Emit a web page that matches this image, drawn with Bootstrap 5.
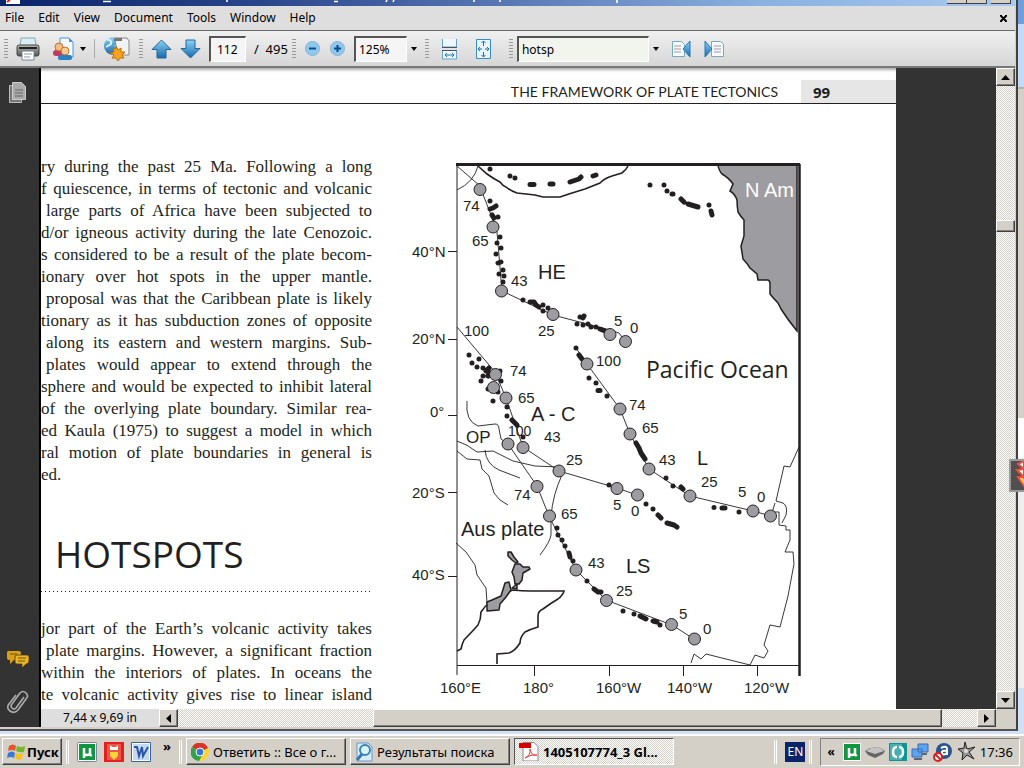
<!DOCTYPE html>
<html lang="en">
<head>
<meta charset="utf-8">
<meta name="viewport" content="width=device-width, initial-scale=1">
<title>Document viewer</title>
<link href="https://cdn.jsdelivr.net/npm/bootstrap@5.3.0/dist/css/bootstrap.min.css" rel="stylesheet">
<script src="https://cdn.jsdelivr.net/npm/bootstrap@5.3.0/dist/js/bootstrap.bundle.min.js" defer></script>
<style>
:root{--face:#d4d0c8;--ink:#231f20}
body{height:100vh;min-height:480px;font-family:"Noto Sans",sans-serif;font-size:13px;line-height:16px;color:#000;background:#d2e0f5}
button{font:inherit;color:inherit;padding:0;border:0;background:none}
svg{display:block;flex:none}
.frame-right{border-right:2px solid #404040;border-bottom:2px solid #55534f;background:var(--face);padding:0 1px 2px 0}
.titlebar{height:6px;background:linear-gradient(90deg,#0a246a,#28458a 25%,#5878b4 50%,#8cb0e0 75%,#a6caf0)}
.capbtn{width:20px;height:4px;background:var(--face);border:solid #404040;border-width:0 1px 1px 0}
.menubar{height:25px;background:#dedede;border-bottom:1px solid #6a6a6a;padding:0 8px 0 5px;gap:14px;font-size:12px}
.menubar a{color:#000;text-decoration:none}
.tools{height:37px;background:linear-gradient(#f0f0f0,#d6d6d6);border-bottom:2px solid #777}
.tools .field{height:26px;border:1px solid #fff;border-top:2px solid #555;border-left:2px solid #555;background:#f5f5f5;padding:0 3px;border-radius:0;font-size:12px;outline:0}
.tools .page-no{width:37px;padding-left:6px;margin-left:8px}
.tools .zoom{width:53px}
.tools .find{width:132px;background:#f2f4ee}
.grip{width:4px;height:22px;background:radial-gradient(circle,#999 1px,transparent 1px) 0 0/2px 3px}
.arrow-dn{border:3px solid transparent;border-top:4px solid #000;border-bottom:0}
.side{width:41px;background:#333;border-right:2px solid #000;padding:14px 4px 13px 0}
.workspace{background:#333}
.sheet{background:#fff;margin-right:100px;box-shadow:inset 0 4px 3px -2px #aaa;color:var(--ink)}
.runhead{height:36px;border-bottom:1px solid #231f20;padding-top:12px;font:14px/16px Lato,sans-serif}
.runhead .folio{width:95px;background:#e6e6e6;padding-left:12px;font:bold 15px/16px "Open Sans",sans-serif}
.runhead .runtitle{padding-right:23px}
.prose{width:331px;padding-top:52px;font-family:"Liberation Serif",serif;font-size:17px;line-height:22px}
.prose .ln{text-align-last:justify;white-space:nowrap}
.prose .in{padding-left:5px}
.prose .end{text-align-last:left}
.prose h1{font:37px/44px "Open Sans",sans-serif;margin:46px 0 15px 14px}
.dots{height:1px;background:repeating-linear-gradient(90deg,#231f20 0 1px,transparent 1px 4px);margin-bottom:26px}
.mapbox{padding-top:51px;margin-left:36px}
.dither{background:repeating-conic-gradient(#fff 0 25%,#d4d0c8 0 50%) 0 0/2px 2px}
.raised{background:var(--face);border:1px solid;border-color:#fff #404040 #404040 #fff;box-shadow:inset -1px -1px #808080}
.vscroll{width:19px}
.vscroll button,.hscroll button{width:19px;height:18px}
.hscroll{height:18px}
.status{width:118px;background:#dedede;text-align:center;font-size:12px;line-height:18px}
.desk-edge{width:6px;background:linear-gradient(#6e9edb 0 24px,#c4d9f5 24px 87px,#b5b2ab 87px 89px,#d4d0c8 89px 418px,#fff 418px 458px,#eee 458px 688px,#d2e0f5 688px)}
.taskbar{height:34px;background:var(--face);border-top:2px solid #fff;gap:4px;padding:2px 4px 3px 2px;margin-top:3px}
.task{height:27px;width:160px;padding:0 4px;white-space:nowrap}
.start{width:60px}
.launch{gap:7px;margin:0 8px 0 4px}
.sunk{border:1px solid;border-color:#555 #fff #fff #555}
.rail{width:3px;height:24px;border:solid;border-width:0 1px;border-color:#808080 #fff}
.tray{border:1px solid;border-color:#808080 #fff #fff #808080;height:28px;padding:0 6px;gap:4px;font-size:12px}
.clock{font-size:13px}
.lang{background:#0a246a;color:#fff;width:20px;height:20px;line-height:20px;font-size:12px}
.flame{right:0;top:459px;width:15px;height:33px;background:#505050;border:2px solid #999;border-right:0}
</style>
</head>
<body class="d-flex flex-column overflow-hidden position-relative">
<div class="d-flex flex-fill overflow-hidden">
 <main class="frame-right d-flex flex-column flex-fill overflow-hidden">
  <div class="titlebar d-flex align-items-start">
   <svg width="640" height="6"><path d="M6 0h14v4H6z" fill="#fff"/><path d="M7 2l3-2" stroke="#d22" stroke-width="2"/><path d="M103 1.500h8M227 0v2M334 1.500h4M387 0l-1 2M394 0l-1 2M474 0v2M500 0v2M617 0v3" stroke="#fff" stroke-width="1.600"/></svg>
   <span class="capbtn ms-auto"></span><span class="capbtn"></span><span class="capbtn ms-1 me-1"></span>
  </div>
  <nav class="menubar d-flex align-items-center">
   <a href="#">File</a><a href="#">Edit</a><a href="#">View</a><a href="#">Document</a><a href="#">Tools</a><a href="#">Window</a><a href="#">Help</a>
   <button class="ms-auto" aria-label="Close document"><svg width="7" height="7"><path d="M0 .5h2M5 .5h2M1 1l5 5M6 1L1 6M0 6.500h2M5 6.500h2" stroke="#000" stroke-width="2"/></svg></button>
  </nav>
  <div class="tools d-flex align-items-center">
   <i class="grip ms-1"></i>
   <button class="ms-1 ps-1" aria-label="Print"><svg width="24" height="24"><defs><linearGradient id="b" x2="0" y2="1"><stop stop-color="#8fd4f5"/><stop offset="1" stop-color="#1768ad"/></linearGradient><linearGradient id="g" x2="0" y2="1"><stop stop-color="#bbb"/><stop offset="1" stop-color="#555"/></linearGradient></defs><path d="M5 1h14l1 8H4z" fill="#d9edf7" stroke="#8aa"/><rect x="1" y="8" width="22" height="11" rx="2" fill="url(#g)" stroke="#444"/><path d="M3 11h18" stroke="#222" stroke-width="2"/><path d="M6 14h12v9H6z" fill="#fff" stroke="#789"/><path d="M8 17h8M8 20h6" stroke="#89a"/></svg></button>
   <button class="ms-2 ps-1 d-flex align-items-center" aria-label="Collaborate"><svg width="24" height="24"><path d="M8 1h9l4 4v15H8z" fill="#f4faff" stroke="#4a96d8"/><path d="M17 1v4h4z" fill="#4a96d8"/><rect x="1" y="13" width="11" height="6" rx="3" fill="#c8385c"/><circle cx="7" cy="10" r="4" fill="#f4bd83" stroke="#bc7333"/><rect x="6" y="18" width="14" height="5" rx="2" fill="#2781c4"/><circle cx="13" cy="14" r="4" fill="#f9cc8f" stroke="#bc7333"/></svg><i class="arrow-dn ms-1"></i></button>
   <i class="vr ms-2 my-2"></i>
   <button class="ms-2" aria-label="Create online"><svg width="28" height="25"><circle cx="10" cy="10" r="9" fill="url(#b)"/><path d="M4 4q5-1 4 4l-5 3M12 3l4 3-4 5" fill="none" stroke="#d7efff" stroke-width="2"/><path d="M12 2h12l2 3v14H14z" fill="#f2f2f2" stroke="#888"/><path d="M11 2h8v3h-8z" fill="#777"/><path d="M13 10l2 4 3-2v4l4 0-3 3 2 3h-4l-2 3-2-3-4 0 2-3-4-2 4-1-1-4 3 1z" fill="#f6a21d" stroke="#b87112"/></svg></button>
   <i class="grip ms-2"></i>
   <button class="ms-2" aria-label="Previous page"><svg width="21" height="20"><path d="M10.500 1L20 10.500h-5V19H6v-8.500H1z" fill="url(#b)" stroke="#23659c"/></svg></button>
   <button class="ms-2" aria-label="Next page"><svg width="21" height="20"><path d="M10.500 19L20 9.500h-5V1H6v8.500H1z" fill="url(#b)" stroke="#23659c"/></svg></button>
   <input class="field page-no" value="112" aria-label="Page number"><span class="ms-2">/&nbsp; 495</span>
   <i class="grip ms-1"></i>
   <button class="ms-2" aria-label="Zoom out"><svg width="17" height="17"><circle cx="8.500" cy="8.500" r="7" fill="#8fc8ef" stroke="#8ab2d0"/><path d="M5 8.500h7" stroke="#0b4d8c" stroke-width="2"/></svg></button>
   <button class="ms-2" aria-label="Zoom in"><svg width="17" height="17"><circle cx="8.500" cy="8.500" r="7" fill="#8fc8ef" stroke="#8ab2d0"/><path d="M5 8.500h7M8.500 5v7" stroke="#0b4d8c" stroke-width="2"/></svg></button>
   <input class="field zoom ms-2" value="125%" aria-label="Zoom"><i class="arrow-dn ms-1"></i>
   <i class="grip ms-2 me-1"></i>
   <button class="ms-2" aria-label="Fit width"><svg width="18" height="22"><path d="M1.500 1v8h14V1M1.500 21v-8.500h14V21z" fill="#eef7fd" stroke="#6aa0cc"/><path d="M1 9.500h15M1 12.500h15" stroke="#456"/><path d="M4 17h9M6 15l-2 2 2 2M11 15l2 2-2 2" fill="none" stroke="#1b72b5"/></svg></button>
   <button class="ms-3" aria-label="Fit page"><svg width="18" height="22"><path d="M1.500 1.500h14v19h-14z" fill="#e6f4fd" stroke="#3a8bca"/><path d="M8.500 3v5M8.500 14v5M3 11h4M10 11h4M6.500 5l2-2 2 2M6.500 17l2 2 2-2M5 9l-2 2 2 2M12 9l2 2-2 2" fill="none" stroke="#1b72b5"/></svg></button>
   <i class="grip ms-3"></i>
   <input class="field find ms-1" value="hotsp" aria-label="Find"><i class="arrow-dn ms-1"></i>
   <button class="ms-2 ps-1" aria-label="Find previous"><svg width="21" height="20"><path d="M1.500 2.500h9l3 3v12h-12z" fill="#f7fbff" stroke="#7ab"/><path d="M3 7h7M3 10h7M3 13h7" stroke="#999"/><path d="M12 10l7-8v16z" fill="url(#b)" stroke="#2a76b5"/></svg></button>
   <button class="ms-2 ps-1" aria-label="Find next"><svg width="21" height="20"><path d="M7.500 2.500h9l3 3v12h-12z" fill="#f7fbff" stroke="#7ab"/><path d="M10 7h7M10 10h7M10 13h7" stroke="#999"/><path d="M8 10L1 2v16z" fill="url(#b)" stroke="#2a76b5"/></svg></button>
  </div>
  <div class="d-flex flex-fill overflow-hidden">
   <aside class="side flex-shrink-0 d-flex flex-column align-items-center">
    <button aria-label="Pages"><svg width="20" height="22"><path d="M1.500 3.500h12v17h-12z" fill="#777" stroke="#bbb"/><path d="M4.500.5h9l4 4v13h-13z" fill="#aaa" stroke="#ccc"/><path d="M7 8h8M7 11h8M7 14h8" stroke="#666"/></svg></button>
    <button class="mt-auto" aria-label="Comments"><svg width="24" height="20"><path d="M2 1h11q2 0 2 2v5q0 2-2 2H8l-4 4V10H3Q1 10 1 8V2z" fill="#d79f1b"/><path d="M11 5h10q2 0 2 2v4q0 3-3 3l-4 4v-4h-5q-2 0-2-2V7q0-2 2-2z" fill="#e9b42c" stroke="#4a3a10" stroke-width=".8"/><path d="M4 4h7M12 8h8M12 11h7" stroke="#775400"/></svg></button>
    <button class="mt-3 pt-1" aria-label="Attachments"><svg width="22" height="24"><path d="M17 7l-8 11q-2 2-4 0t0-4L13 3q3-3 6 0t0 6l-8 11q-4 4-8 1t-1-7L9 5" fill="none" stroke="#aaa" stroke-width="1.700"/></svg></button>
   </aside>
   <div class="d-flex flex-column flex-fill overflow-hidden">
    <div class="d-flex flex-fill overflow-hidden">
     <div class="workspace flex-fill overflow-hidden d-flex">
      <article class="sheet flex-fill overflow-hidden">
       <header class="runhead d-flex"><span class="runtitle ms-auto pt-1">THE FRAMEWORK OF PLATE TECTONICS</span><span class="folio pt-1">99</span></header>
       <div class="d-flex">
        <section class="prose flex-shrink-0">
         <div class="ln">ry during the past 25 Ma. Following a long</div>
         <div class="ln">f quiescence, in terms of tectonic and volcanic</div>
         <div class="ln in">large parts of Africa have been subjected to</div>
         <div class="ln">d/or igneous activity during the late Cenozoic.</div>
         <div class="ln">s considered to be a result of the plate becom-</div>
         <div class="ln">ionary over hot spots in the upper mantle.</div>
         <div class="ln in">proposal was that the Caribbean plate is likely</div>
         <div class="ln">tionary as it has subduction zones of opposite</div>
         <div class="ln in">along its eastern and western margins. Sub-</div>
         <div class="ln in">plates would appear to extend through the</div>
         <div class="ln">sphere and would be expected to inhibit lateral</div>
         <div class="ln">of the overlying plate boundary. Similar rea-</div>
         <div class="ln">ed Kaula (1975) to suggest a model in which</div>
         <div class="ln">ral motion of plate boundaries in general is</div>
         <div class="ln end">ed.</div>
         <h1>HOTSPOTS</h1>
         <div class="dots"></div>
         <div class="ln">jor part of the Earth’s volcanic activity takes</div>
         <div class="ln in">plate margins. However, a significant fraction</div>
         <div class="ln">within the interiors of plates. In oceans the</div>
         <div class="ln">te volcanic activity gives rise to linear island</div>
        </section>
        <figure class="mapbox mb-0">
<svg width="400" height="545" viewBox="408 155 400 545" font-family="Liberation Sans,sans-serif" font-size="15" fill="#231f20">
<path d="M718 165q1 6 4 9 7 4 11 10l-3 7q5 3 7 9 0 6 1 12 3 5 6 8v16l-3 10 2 13q4 4 7 9l7 6 1 6 10 0q2 1 2 3v11q4 5 8 9l3 6q7 11 16 22V165z" fill="#9d9ca1" stroke="#231f20" stroke-width="1.500"/>
<g fill="none" stroke="#231f20">
<path d="M456 164.500h344" stroke-width="3"/><path d="M799.500 164v512" stroke-width="2.500"/><path d="M457 165v510M457 665.500h343M448 251.500h9M448 339.500h9M448 415.500h9M448 492.500h9M448 576.500h9M534.500 665v11M609.500 665v11M683.500 665v11M757.500 665v11"/>
<path d="M478 166l9 8q7 5 13 8 3 4 6 5 5 4 11 6l18 2 8 2h17l12-4 13-4 15-6q5-5 12-7l10-3q4-3 6-7M457 651l4-2q1-5 3-9 7-7 14-15 3-6 3-13 4-6 9-10 6 0 10-4 6-6 13-8 9 1 17 1h34q-1 4-6 8-7 4-15 10-5 2-5 7v11q-7 2-13 5-5 5-5 11-5 8-11 10l-12 1v10" stroke-width="1.600"/>
<g stroke-width=".9"><path d="M457 190q17-8 21-24M457 166l23 20 4 11 9 23 4 12 5 59 51 24 57 15 9 3 7 9M457 327l38 45 11 26 17 49 36 24 58 17 20 7M576 348l11 16 33 45 10 25 19 35 41 27 63 15 18 5M508 444l29 42 12 30 27 54 30 30 66 25 22 14"/>
<path d="M467 401q-2 20 11 25l17-2q4 0 4 5l2 10 7 5M457 441q10 3 20 11l16-1 20 10 22 5 24 1M457 451l10 8 13 1 2 9 7 7 5 17 6 7 8 5M485 450q1 14 14 20l21 8M562 475q-9 19-11 41v19q-1 7-11 20M456 543l10 9 9 13 2 10 9 13 1 15"/>
<path d="M799 447l-9 20-6-1-8 35 7 2q5 3 3 12l-4 8M771 516l4-13M772 512h7v13l7 1v4h4v10l-5 12h8l1 12-6 32-8 31-10-2-6 20 4 6-4 7-9-3-5 10-44-11-5 5-7-5-3 9"/></g></g>
<g fill="#9d9ca1" stroke="#231f20" stroke-width="1.500" stroke-linejoin="round"><path d="M508 552l3 0 3 5 4 5-2 1-4-3-4-4z"/><path d="M515 564h5l3 3 6 0 1 2-7 4-1 7-3 4h-4l-1-7-2-5z"/><path d="M505 583l4-1 2 8-5 7-6 7-1 6-12 1v-9l5-2 9-4z"/><path d="M512 588l5-4v5z"/></g>
<g fill="none" stroke="#231f20" stroke-width="5" stroke-linecap="round" stroke-linejoin="round"><path d="M490 169h0M510 176h0M515 178h0M530 184.500h4M550 184h3M570 182l9-3 2-2M593 176l3-1M650 185h0M664 185h0M667 191h0M672 194h1M681 199l3 3M688 204l10 3M709 205h0M711 211l1 4M490 201h0M490 209l3-1 3-2M492 215l2 3M498 217h0M500 237h0M497 243h0M501 248h0M496 254h0M498 263l3-1M503 270h0M499 274h0M504 276h0M503 282h0M523 300h0M530 302h4l2 3 3 2M543 305h0M543 311h0M548 308h0M580 317h0M583 318l1-2M577 324h0M583 325h0M588 324h0M591 327h0M596 327h0M600 329l5 2"/>
<path d="M576 348h0M579 355l3 4M589 378h0M596 383h0M598 390.500h2M607 396h0M636 443l3 5 2 5 4 6M666 478h0M673 486h0M681 487l2 2M714 507.500h0M722 508h3M739 512h0M469 355h0M479 359h0M472 363h0M477 367h0M483 368h0M489 368l-3 3M483 376h0M488 376l2-3M481 381h0M500 371h0M501 381h0M488 389h0M498 392h0M493 401h0M507 407h0M507 416h0M512 420l5 5M523 437h0M609 485h0M646 504h0M653 509h0M658 515l3 3M667 523l7 2 3 2M557 528h0M558 535h0M562 540h0M565 546h0M569 553l1 4M573 561h0M587 581h0M594 589l4 3h3M623 611h0M634 614h0M640 616l6 3M653 621l4 1M660 625h0"/></g>
<g fill="#9d9ca1" stroke="#231f20"><circle cx="480" cy="189.500" r="6"/><circle cx="493" cy="227" r="6"/><circle cx="501.500" cy="291" r="6"/><circle cx="553" cy="314.500" r="6"/><circle cx="610" cy="334.500" r="6"/><circle cx="625.500" cy="341.500" r="6"/><circle cx="587" cy="364" r="6"/><circle cx="620" cy="409" r="6"/><circle cx="630" cy="434" r="6"/><circle cx="649" cy="469" r="6"/><circle cx="690" cy="496" r="6"/><circle cx="753" cy="511" r="6"/><circle cx="770.500" cy="516" r="6"/><circle cx="495.500" cy="374.500" r="6"/><circle cx="493.500" cy="387.500" r="6"/><circle cx="506" cy="398" r="6"/><circle cx="523" cy="447.500" r="6"/><circle cx="559" cy="471" r="6"/><circle cx="617" cy="488.500" r="6"/><circle cx="637.500" cy="495" r="6"/><circle cx="508" cy="444" r="6"/><circle cx="537" cy="486.500" r="6"/><circle cx="549.500" cy="516" r="6"/><circle cx="576" cy="570" r="6"/><circle cx="606.500" cy="600.500" r="6"/><circle cx="671.500" cy="624.500" r="6"/><circle cx="694.500" cy="639" r="6"/></g>
<text x="463" y="211">74</text><text x="472" y="246">65</text><text x="511" y="286">43</text><text x="538" y="336">25</text><text x="614" y="326">5</text><text x="630" y="333">0</text><text x="464" y="336">100</text><text x="596" y="366">100</text><text x="510" y="376">74</text><text x="518" y="403">65</text><text x="508" y="436" font-size="14">100</text><text x="544" y="442">43</text><text x="566" y="465">25</text><text x="629" y="410">74</text><text x="642" y="433">65</text><text x="659" y="465">43</text><text x="701" y="487">25</text><text x="738" y="497">5</text><text x="757" y="502">0</text><text x="514" y="500">74</text><text x="561" y="519">65</text><text x="613" y="510">5</text><text x="631" y="516">0</text><text x="588" y="568">43</text><text x="616" y="596">25</text><text x="679" y="619">5</text><text x="703" y="634">0</text>
<text x="412" y="257">40°N</text><text x="412" y="344">20°N</text><text x="430" y="417">0°</text><text x="412" y="498">20°S</text><text x="412" y="580">40°S</text><text x="440" y="693">160°E</text><text x="523" y="693">180°</text><text x="596" y="693">160°W</text><text x="667" y="693">140°W</text><text x="744" y="693">120°W</text>
<g font-size="20"><text x="538" y="279">HE</text><text x="531" y="421">A - C</text><text x="697" y="465">L</text><text x="626" y="573">LS</text><text x="461" y="536">Aus plate</text><text x="745" y="197" fill="#fff">N Am</text></g><text x="466" y="443" font-size="17">OP</text><text x="646" y="378" font-size="23" font-family="Open Sans,sans-serif">Pacific Ocean</text>
</svg>
        </figure>
       </div>
      </article>
     </div>
     <div class="vscroll dither d-flex flex-column">
      <button class="raised d-flex align-items-center justify-content-center" aria-label="Scroll up"><svg width="9" height="5"><path d="M0 5l4.500-5L9 5z"/></svg></button>
      <div class="flex-fill d-flex flex-column"><div style="flex:134"></div><div class="raised" style="height:12px"></div><div style="flex:459"></div></div>
      <button class="raised d-flex align-items-center justify-content-center" aria-label="Scroll down"><svg width="9" height="5"><path d="M0 0l4.500 5L9 0z"/></svg></button>
     </div>
    </div>
    <div class="hscroll d-flex flex-shrink-0">
     <div class="status">7,44 x 9,69 in</div>
     <button class="raised d-flex align-items-center justify-content-center" aria-label="Scroll left"><svg width="5" height="9"><path d="M5 0v9L0 4.500z"/></svg></button>
     <div class="flex-fill d-flex dither"><div style="flex:195"></div><div class="raised" style="flex:569"></div><div style="flex:35"></div></div>
     <button class="raised d-flex align-items-center justify-content-center" aria-label="Scroll right"><svg width="5" height="9"><path d="M0 0v9l5-4.500z"/></svg></button>
     <div class="vscroll"></div>
    </div>
   </div>
  </div>
 </main>
 <div class="desk-edge"></div>
</div>
<footer class="taskbar d-flex align-items-center flex-shrink-0">
 <button class="raised task start d-flex align-items-center fw-bold px-1"><svg width="20" height="18"><path d="M2 3q4-3 7 0L8 8Q5 6 1 8z" fill="#e8532a"/><path d="M10 3q4 2 8 0l-1 6q-4 1-8-1z" fill="#77b82a"/><path d="M1 10q4-3 7 0l-1 5q-3-2-7 0z" fill="#3a78d6"/><path d="M9 10q4 2 7 0l-1 6q-4 2-7-1z" fill="#f6c222"/></svg>Пуск</button>
 <i class="rail"></i>
 <div class="launch d-flex align-items-center">
 <button aria-label="Torrent"><svg width="20" height="20"><rect x=".5" y=".5" width="19" height="19" rx="1" fill="#fff" stroke="#789"/><path d="M2 2h16v16H2z" fill="#10973d"/><path d="M7 16V6v5q0 2 3 2t3-2V6v6q0 2 2 1" fill="none" stroke="#fff" stroke-width="2.500"/></svg></button>
 <button aria-label="Messenger"><svg width="20" height="20"><path d="M0 0h20v20H0z" fill="#e22020"/><path d="M3 2h14v16H3z" fill="#ee5748"/><path d="M6 3l2 2h4l2-2v5H6z" fill="#fff"/><path d="M6 10h8v4l-4 4-4-4z" fill="#ffd438"/></svg></button>
 <button aria-label="Word processor"><svg width="20" height="20"><path d="M.5.5h19v19H.5z" fill="#fff" stroke="#3564ad"/><path d="M2 2h16v16H2z" fill="#c6d9f4"/><path d="M3 5h3l2 9 3-9 1 9 5-9" fill="none" stroke="#2a55a4" stroke-width="2"/></svg></button>
 </div>
 <span class="align-self-start fw-bold">»</span>
 <i class="rail ms-1"></i>
 <button class="raised task d-flex align-items-center gap-1"><svg width="18" height="18"><circle cx="9" cy="9" r="9" fill="#ffd42e"/><path d="M9 9L1 4a9 9 0 0 1 16 1z" fill="#db3328"/><path d="M9 9L1 4a9 9 0 0 0 7 14l4-7z" fill="#34a24b"/><circle cx="9" cy="9" r="4" fill="#3679cd" stroke="#fff"/></svg>Ответить :: Все о г...</button>
 <button class="raised task d-flex align-items-center gap-1"><svg width="18" height="20"><path d="M2 1h11l4 4v14H2z" fill="#d7edff" stroke="#6896c8"/><circle cx="10" cy="8" r="5" fill="#d9f6ff" stroke="#3b83b5" stroke-width="2"/><path d="M7 12l-5 6" stroke="#3977ad" stroke-width="3"/></svg>Результаты поиска</button>
 <button class="sunk dither task d-flex align-items-center gap-1 fw-bold"><svg width="20" height="19"><path d="M4 .5h11l4 4V19H4z" fill="#fff" stroke="#888"/><path d="M0 1h12v5H0z" fill="#d60000"/><path d="M6 16q6-3 5-9 1 7 7 6-6-1-12 3" fill="none" stroke="#e34037"/></svg>1405107774_3 Gl...</button>
 <i class="rail ms-auto me-1"></i><span class="lang text-center">EN</span><i class="rail me-1"></i>
 <div class="tray d-flex align-items-center"><b class="pe-1">«</b>
  <svg width="18" height="18"><path d="M0 0h18v18H0z" fill="#fff"/><path d="M1 1h16v16H1z" fill="#10973d"/><path d="M6 15V5v5q0 2 3 2t3-2V5v6q0 2 2 1" fill="none" stroke="#fff" stroke-width="2.500"/></svg>
  <svg width="20" height="12"><path d="M0 5l5-3 9-1 6 4-2 3-8 4-7-3z" fill="#666"/><path d="M1 5l5-3 8-1 5 4-9 3z" fill="#c4c4c4"/></svg>
  <svg width="18" height="18"><path d="M0 0h18v18H0z" fill="#0a9694"/><path d="M1 1h12v16H1z" fill="#fff" opacity=".25"/><path d="M8 4q-4 0-4 5t4 5M10 4q4 0 4 5t-4 5" fill="none" stroke="#fff" stroke-width="2.500"/></svg>
  <svg width="18" height="18"><path d="M7 1h10v8H7zM1 6h10v8H1z" fill="#57a6f5" stroke="#4569a5"/><path d="M3 16h8M11 11h5" stroke="#567" stroke-width="2"/></svg>
  <svg width="20" height="20"><circle cx="11" cy="9" r="8" fill="#29568f"/><path d="M8 6q6-3 6 1v6M14 9q-6-1-5 2t5 0" fill="none" stroke="#fff" stroke-width="2"/><circle cx="5" cy="15" r="4" fill="#fff" stroke="#d91e1e" stroke-width="2"/><path d="M2 12l6 6" stroke="#d91e1e" stroke-width="2"/></svg>
  <svg width="19" height="19"><path d="M8 0l2 7 8-2-6 5 5 7-7-4-5 5 1-7-5-4 6-1z" fill="#999" stroke="#222"/><circle cx="9" cy="9" r="2" fill="#ddd"/></svg>
  <span class="clock text-nowrap">17:36</span></div>
</footer>
<div class="flame position-absolute overflow-hidden"><svg width="13" height="29"><path d="M13 0L7 3l6 5-7 1 7 7-6 0 6 9z" fill="#fff" stroke="#f24b3b" stroke-width="2"/><path d="M13 18l-4-1 4 7z" fill="#ffc52b"/></svg></div>
</body>
</html>
